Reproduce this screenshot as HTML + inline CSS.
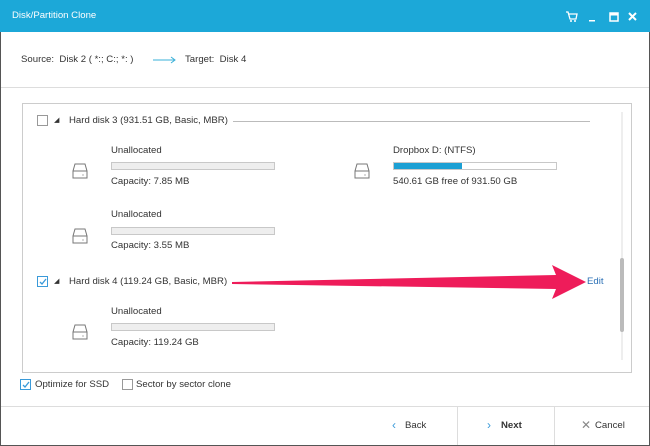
<!DOCTYPE html>
<html><head><style>
*{margin:0;padding:0;box-sizing:border-box}
body{width:650px;height:446px;overflow:hidden;background:#fff;font-family:"Liberation Sans",sans-serif;font-size:9.6px;color:#333;position:relative}
.a{position:absolute;white-space:nowrap}
.bar{position:absolute;height:8px;border:1px solid #c8c8c8;background:#eee;width:164px}
.cb{position:absolute;width:11px;height:11px;border:1px solid #999;background:#fff}
.cbc{border-color:#3a9ad9}
</style></head><body>
<div class="a" style="left:0;top:0;width:650px;height:446px;border:1px solid #555"></div>
<div class="a" style="left:0;top:0;width:650px;height:32px;background:#1ca8d8"></div>
<div class="a" style="left:12px;top:10px;color:#fff;font-size:9.6px">Disk/Partition Clone</div>
<svg class="a" style="left:565px;top:10px" width="80" height="14">
<path d="M1 2h2l2 7h6l1-5H4" stroke="#fff" stroke-width="1.3" fill="none"/><circle cx="6" cy="11" r="1" fill="#fff"/><circle cx="10" cy="11" r="1" fill="#fff"/>
<rect x="24" y="10" width="6" height="1.5" fill="#fff"/>
<rect x="45" y="3" width="8" height="8" fill="none" stroke="#fff" stroke-width="1.5"/><rect x="45" y="3" width="8" height="2.5" fill="#fff"/>
<path d="M64 3l7 7M71 3l-7 7" stroke="#fff" stroke-width="2"/></svg>
<div class="a" style="left:21px;top:54px">Source:&nbsp;&nbsp;Disk 2 ( *:; C:; *: )</div>
<svg class="a" style="left:153px;top:55px" width="25" height="10"><path d="M0 5h22M18 2l4 3-4 3" stroke="#3ab0d8" fill="none"/></svg>
<div class="a" style="left:185px;top:54px">Target:&nbsp;&nbsp;Disk 4</div>
<div class="a" style="left:1px;top:87px;width:648px;height:1px;background:#ddd"></div>
<div class="a" style="left:22px;top:103px;width:610px;height:270px;border:1px solid #ccc"></div>
<div class="a" style="left:621px;top:112px;width:2px;height:248px;background:#eee"></div>
<div class="a" style="left:620px;top:258px;width:4px;height:74px;background:#bbb;border-radius:2px"></div>
<div class="cb" style="left:37px;top:115px"></div>
<div class="a" style="left:54px;top:116px;font-size:7px;color:#333">◢</div>
<div class="a" style="left:69px;top:115px">Hard disk 3 (931.51 GB, Basic, MBR)</div>
<div class="a" style="left:233px;top:121px;width:357px;height:1px;background:#bbb"></div>
<svg width="0" height="0" style="position:absolute"><defs><g id="d"><path d="M3 2h10l2 7v7H1V9z M1 9h14" stroke="#777" stroke-width="1" fill="none"/><circle cx="11" cy="13" r=".6" fill="#777"/></g></defs></svg>
<svg class="a" style="left:72px;top:162px" width="17" height="18"><use href="#d"/></svg>
<svg class="a" style="left:72px;top:227px" width="17" height="18"><use href="#d"/></svg>
<svg class="a" style="left:354px;top:162px" width="17" height="18"><use href="#d"/></svg>
<svg class="a" style="left:72px;top:323px" width="17" height="18"><use href="#d"/></svg>
<div class="a" style="left:111px;top:145px">Unallocated</div>
<div class="bar" style="left:111px;top:162px"></div>
<div class="a" style="left:111px;top:176px">Capacity: 7.85 MB</div>
<div class="a" style="left:111px;top:209px">Unallocated</div>
<div class="bar" style="left:111px;top:227px"></div>
<div class="a" style="left:111px;top:240px">Capacity: 3.55 MB</div>
<div class="a" style="left:393px;top:145px">Dropbox D: (NTFS)</div>
<div class="bar" style="left:393px;top:162px;background:#fff"><div style="width:68px;height:6px;background:#1ca0d4"></div></div>
<div class="a" style="left:393px;top:176px">540.61 GB free of 931.50 GB</div>
<div class="cb cbc" style="left:37px;top:276px"></div>
<svg class="a" style="left:38px;top:277px" width="10" height="10"><path d="M2 5l2 2 4-5" stroke="#3a9ad9" stroke-width="1.3" fill="none"/></svg>
<div class="a" style="left:54px;top:277px;font-size:7px">◢</div>
<div class="a" style="left:69px;top:276px">Hard disk 4 (119.24 GB, Basic, MBR)</div>
<div class="a" style="left:111px;top:306px">Unallocated</div>
<div class="bar" style="left:111px;top:323px"></div>
<div class="a" style="left:111px;top:337px">Capacity: 119.24 GB</div>
<svg class="a" style="left:230px;top:262px" width="360" height="40"><path d="M2 20 L326 13 L322 3 L356 20 L322 37 L326 27 L2 22z" fill="#ee1c5a"/></svg>
<div class="a" style="left:587px;top:276px;color:#2a6fb5">Edit</div>
<div class="cb cbc" style="left:20px;top:379px"></div>
<svg class="a" style="left:21px;top:380px" width="10" height="10"><path d="M2 5l2 2 4-5" stroke="#3a9ad9" stroke-width="1.3" fill="none"/></svg>
<div class="a" style="left:35px;top:379px">Optimize for SSD</div>
<div class="cb" style="left:122px;top:379px"></div>
<div class="a" style="left:136px;top:379px">Sector by sector clone</div>
<div class="a" style="left:1px;top:406px;width:648px;height:1px;background:#ddd"></div>
<div class="a" style="left:457px;top:407px;width:1px;height:38px;background:#ddd"></div>
<div class="a" style="left:554px;top:407px;width:1px;height:38px;background:#ddd"></div>
<div class="a" style="left:392px;top:418px;color:#3a9ad9;font-size:12px">‹</div>
<div class="a" style="left:405px;top:420px">Back</div>
<div class="a" style="left:487px;top:418px;color:#3a9ad9;font-size:12px">›</div>
<div class="a" style="left:501px;top:420px;font-weight:bold">Next</div>
<div class="a" style="left:581px;top:418px;color:#888;font-size:12px">✕</div>
<div class="a" style="left:595px;top:420px">Cancel</div>
</body></html>
